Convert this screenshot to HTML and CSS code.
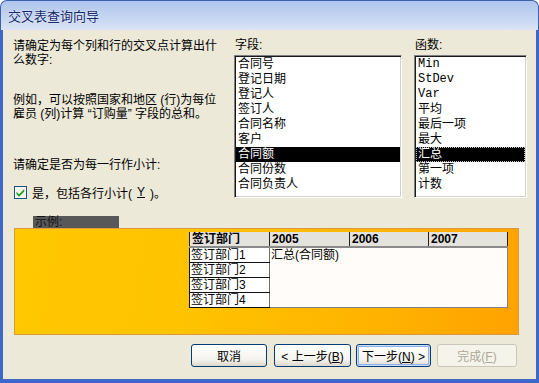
FILE: index.html
```html
<!DOCTYPE html>
<html lang="zh-CN">
  <head>
    <meta charset="UTF-8" />
    <title>交叉表查询向导</title>
    <link rel="stylesheet" href="styles.css">
  </head>
  <body>
    <div class="window">
      <div class="titlebar">
        <span class="title">交叉表查询向导</span>
      </div>

      <div class="frame">
        <div class="top">
          <div class="intro">
            <p class="para">请确定为每个列和行的交叉点计算出什<br />么数字:</p>
            <p class="para para-example">例如，可以按照国家和地区 (行)为每位<br />雇员 (列)计算 “订购量” 字段的总和。</p>
            <p class="para para-sub">请确定是否为每一行作小计:</p>
            <label class="check">
              <span class="check-box">
                <svg width="13" height="13" viewBox="0 0 13 13">
                  <rect x="0.5" y="0.5" width="12" height="12" fill="#f4f4ef" stroke="#1c5180" />
                  <path d="M2.5 5.8 L5 8.3 L10.3 3 L10.3 5.4 L5 10.7 L2.5 8.2 Z" fill="#21a121" />
                </svg>
              </span>
              是，包括各行小计(<u>Y</u>)。
            </label>
          </div>

          <div class="list-col">
            <div class="list-label">字段:</div>
            <ul class="listbox listbox-fields">
              <li>合同号</li>
              <li>登记日期</li>
              <li>登记人</li>
              <li>签订人</li>
              <li>合同名称</li>
              <li>客户</li>
              <li class="selected">合同额</li>
              <li>合同份数</li>
              <li>合同负责人</li>
            </ul>
          </div>

          <div class="list-col">
            <div class="list-label">函数:</div>
            <ul class="listbox">
              <li class="mono">Min</li>
              <li class="mono">StDev</li>
              <li class="mono">Var</li>
              <li>平均</li>
              <li>最后一项</li>
              <li>最大</li>
              <li class="selected focused">汇总</li>
              <li>第一项</li>
              <li>计数</li>
            </ul>
          </div>
        </div>

        <div class="sample">
          <div class="sample-label">示例:</div>
          <div class="sample-panel">
            <table class="grid">
              <colgroup>
                <col class="col-head" />
                <col class="col-year" />
                <col class="col-year2" />
                <col class="col-year2" />
              </colgroup>
              <tr>
                <th>签订部门</th>
                <th>2005</th>
                <th>2006</th>
                <th class="last">2007</th>
              </tr>
              <tr>
                <td class="rowhead">签订部门1</td>
                <td class="cell">汇总(合同额)</td>
                <td class="cell"></td>
                <td class="cell last"></td>
              </tr>
              <tr>
                <td class="rowhead">签订部门2</td>
                <td class="cell"></td>
                <td class="cell"></td>
                <td class="cell last"></td>
              </tr>
              <tr>
                <td class="rowhead">签订部门3</td>
                <td class="cell"></td>
                <td class="cell"></td>
                <td class="cell last"></td>
              </tr>
              <tr class="bottom">
                <td class="rowhead">签订部门4</td>
                <td class="cell"></td>
                <td class="cell"></td>
                <td class="cell last"></td>
              </tr>
            </table>
          </div>
        </div>

        <div class="buttons">
          <button class="btn btn-cancel">取消</button>
          <button class="btn btn-back">&lt; 上一步(<u>B</u>)</button>
          <button class="btn btn-next">下一步(<u>N</u>) &gt;</button>
          <button class="btn btn-finish" disabled>完成(<u>F</u>)</button>
        </div>
      </div>
    </div>
  </body>
</html>
```

FILE: styles.css
```css
body {
  margin: 0;
  background: #ffffff;
  font-family: "Liberation Sans", "Noto Sans CJK SC", sans-serif;
  font-size: 12px;
  color: #000;
}

.window {
  width: 539px;
  height: 383px;
  display: flex;
  flex-direction: column;
}

/* title bar */
.titlebar {
  height: 30px;
  box-sizing: border-box;
  border: 1px solid #3d5fae;
  border-bottom: none;
  border-radius: 7px 7px 0 0;
  background: linear-gradient(#b0c5ee, #bccfef 35%, #cbd9f3 70%, #dae4f5);
  padding-left: 7px;
  display: flex;
  align-items: center;
}

.title {
  font-size: 13px;
  color: #14296b;
  text-shadow: 0 0 2px #ffffff;
}

.frame {
  flex: 1;
  background: #ece9d8;
  border-style: solid;
  border-color: #3f67c9;
  border-width: 0 3px 4px 3px;
  padding: 8px 0 0 10px;
}

/* upper part */
.top {
  display: grid;
  grid-template-columns: 221px 180px 113px;
}

.para {
  margin: 0;
  line-height: 14px;
  white-space: nowrap;
}

.intro .para:first-child {
  margin-top: 1px;
}

.para-example {
  margin-top: 26px;
}

.para-sub {
  margin-top: 37px;
}

.check {
  margin-top: 13px;
  height: 14px;
  display: flex;
  align-items: center;
  gap: 5px;
  padding-left: 1px;
  white-space: nowrap;
}

.check-box {
  width: 13px;
  height: 13px;
  display: flex;
}

.list-label {
  line-height: 14px;
  margin-bottom: 3px;
  padding-left: 1px;
}

.listbox {
  margin: 0;
  padding: 1px 0 0 1px;
  list-style: none;
  height: 143px;
  box-sizing: border-box;
  background: #ffffff;
  border: 1px solid;
  border-color: #808080 #ffffff #ffffff #808080;
  box-shadow: inset 1px 1px 0 #1a1a1a, inset -1px -1px 0 #d4d0c8;
}

.listbox-fields {
  width: 168px;
}

.listbox li {
  height: 15px;
  line-height: 15px;
  padding-left: 2px;
  margin-right: 1px;
  white-space: nowrap;
}

.listbox .mono {
  font-family: "Liberation Mono", monospace;
}

.listbox .selected {
  background: #000000;
  color: #ffffff;
}

.listbox .focused {
  outline: 1px dotted #bdbdbd;
  outline-offset: -1px;
}

/* sample */
.sample {
  margin-top: 17px;
}

.sample-label {
  width: 84px;
  height: 12px;
  margin-left: 20px;
  padding-left: 2px;
  line-height: 12px;
  background: #585858;
  color: #141414;
}

.sample-panel {
  width: 505px;
  height: 107px;
  box-sizing: border-box;
  margin-left: 1px;
  border: 1px solid #dd9a3c;
  background: linear-gradient(100deg, #ffc800 0%, #ffc300 35%, #ffb400 70%, #ffa200 100%);
  padding: 3px 0 0 174px;
}

.grid {
  width: 318px;
  border-collapse: collapse;
  table-layout: fixed;
}

.col-head,
.col-year {
  width: 80px;
}

.col-year2 {
  width: 79px;
}

.grid th {
  height: 14px;
  padding: 0 2px;
  text-align: left;
  font-weight: bold;
  line-height: 14px;
  background: #e4e2dc;
  border-left: 1px solid #222;
  border-bottom: 2px solid #8a8a8a;
}

.grid th.last {
  border-right: 1px solid #222;
}

.grid td {
  height: 14px;
  line-height: 14px;
  padding: 0 1px;
  white-space: nowrap;
}

.grid .rowhead {
  background: #ffffff;
  border-left: 1px solid #111;
  border-bottom: 1px solid #111;
  border-right: 1px solid #6e6e6e;
}

.grid .cell {
  background: #fffcf9;
}

.grid .cell.last {
  border-right: 1px solid #808080;
}

.grid .bottom .cell {
  border-bottom: 1px solid #808080;
}

/* buttons */
.buttons {
  margin-top: 9px;
  display: flex;
  padding-left: 178px;
}

.btn {
  height: 23px;
  box-sizing: border-box;
  border: 1px solid #003c74;
  border-radius: 3px;
  background: linear-gradient(#ffffff, #f4f3ee 70%, #dcd7cb);
  font-family: "Liberation Sans", "Noto Sans CJK SC", sans-serif;
  font-size: 12px;
  color: #000;
  padding: 0;
}

.btn-cancel {
  width: 76px;
}

.btn-back {
  width: 77px;
  margin-left: 7px;
}

.btn-next {
  width: 75px;
  margin-left: 5px;
  box-shadow: inset 0 0 0 1px #cfdcf6, inset 0 0 0 2px #8daef0;
}

.btn-finish {
  width: 80px;
  margin-left: 6px;
  border-color: #c9c7ba;
  background: #f5f4ea;
  color: #aca899;
}
```
